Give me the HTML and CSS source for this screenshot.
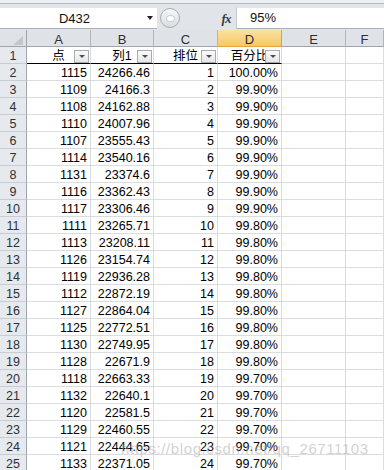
FILE: index.html
```html
<!DOCTYPE html>
<html lang="zh-CN">
<head>
    <meta charset="UTF-8">
    <title>Sheet</title>
    <link rel="stylesheet" href="styles.css">
</head>
<body>
    <div class="topstrip"></div>
    <div class="fbar">
        <div class="namebox"><span class="nb-text">D432</span><span class="nb-arrow"></span></div>
        <div class="splitter"><span class="shine"></span></div>
        <div class="fx">fx</div>
        <div class="formula">95%</div>
    </div>

    <div class="sheet">
        <div class="row colhead">
            <div class="corner"><svg width="10" height="9" viewBox="0 0 10 9"><polygon points="10,0 10,9 0,9" fill="#c3c8cf"/></svg></div>
            <div class="ch">A</div><div class="ch">B</div><div class="ch">C</div>
            <div class="ch sel">D</div><div class="ch">E</div><div class="ch">F</div>
        </div>
        <div class="row thead">
            <div class="rh">1</div>
            <div class="c hd">点<span class="dd"></span></div>
            <div class="c hd">列1<span class="dd"></span></div>
            <div class="c hd">排位<span class="dd"></span></div>
            <div class="c hd">百分比<span class="dd"></span></div>
            <div class="c"></div><div class="c"></div>
        </div>
        <div class="row"><div class="rh">2</div><div class="c">1115</div><div class="c">24266.46</div><div class="c">1</div><div class="c">100.00%</div><div class="c"></div><div class="c"></div></div>
        <div class="row"><div class="rh">3</div><div class="c">1109</div><div class="c">24166.3</div><div class="c">2</div><div class="c">99.90%</div><div class="c"></div><div class="c"></div></div>
        <div class="row"><div class="rh">4</div><div class="c">1108</div><div class="c">24162.88</div><div class="c">3</div><div class="c">99.90%</div><div class="c"></div><div class="c"></div></div>
        <div class="row"><div class="rh">5</div><div class="c">1110</div><div class="c">24007.96</div><div class="c">4</div><div class="c">99.90%</div><div class="c"></div><div class="c"></div></div>
        <div class="row"><div class="rh">6</div><div class="c">1107</div><div class="c">23555.43</div><div class="c">5</div><div class="c">99.90%</div><div class="c"></div><div class="c"></div></div>
        <div class="row"><div class="rh">7</div><div class="c">1114</div><div class="c">23540.16</div><div class="c">6</div><div class="c">99.90%</div><div class="c"></div><div class="c"></div></div>
        <div class="row"><div class="rh">8</div><div class="c">1131</div><div class="c">23374.6</div><div class="c">7</div><div class="c">99.90%</div><div class="c"></div><div class="c"></div></div>
        <div class="row"><div class="rh">9</div><div class="c">1116</div><div class="c">23362.43</div><div class="c">8</div><div class="c">99.90%</div><div class="c"></div><div class="c"></div></div>
        <div class="row"><div class="rh">10</div><div class="c">1117</div><div class="c">23306.46</div><div class="c">9</div><div class="c">99.90%</div><div class="c"></div><div class="c"></div></div>
        <div class="row"><div class="rh">11</div><div class="c">1111</div><div class="c">23265.71</div><div class="c">10</div><div class="c">99.80%</div><div class="c"></div><div class="c"></div></div>
        <div class="row"><div class="rh">12</div><div class="c">1113</div><div class="c">23208.11</div><div class="c">11</div><div class="c">99.80%</div><div class="c"></div><div class="c"></div></div>
        <div class="row"><div class="rh">13</div><div class="c">1126</div><div class="c">23154.74</div><div class="c">12</div><div class="c">99.80%</div><div class="c"></div><div class="c"></div></div>
        <div class="row"><div class="rh">14</div><div class="c">1119</div><div class="c">22936.28</div><div class="c">13</div><div class="c">99.80%</div><div class="c"></div><div class="c"></div></div>
        <div class="row"><div class="rh">15</div><div class="c">1112</div><div class="c">22872.19</div><div class="c">14</div><div class="c">99.80%</div><div class="c"></div><div class="c"></div></div>
        <div class="row"><div class="rh">16</div><div class="c">1127</div><div class="c">22864.04</div><div class="c">15</div><div class="c">99.80%</div><div class="c"></div><div class="c"></div></div>
        <div class="row"><div class="rh">17</div><div class="c">1125</div><div class="c">22772.51</div><div class="c">16</div><div class="c">99.80%</div><div class="c"></div><div class="c"></div></div>
        <div class="row"><div class="rh">18</div><div class="c">1130</div><div class="c">22749.95</div><div class="c">17</div><div class="c">99.80%</div><div class="c"></div><div class="c"></div></div>
        <div class="row"><div class="rh">19</div><div class="c">1128</div><div class="c">22671.9</div><div class="c">18</div><div class="c">99.80%</div><div class="c"></div><div class="c"></div></div>
        <div class="row"><div class="rh">20</div><div class="c">1118</div><div class="c">22663.33</div><div class="c">19</div><div class="c">99.70%</div><div class="c"></div><div class="c"></div></div>
        <div class="row"><div class="rh">21</div><div class="c">1132</div><div class="c">22640.1</div><div class="c">20</div><div class="c">99.70%</div><div class="c"></div><div class="c"></div></div>
        <div class="row"><div class="rh">22</div><div class="c">1120</div><div class="c">22581.5</div><div class="c">21</div><div class="c">99.70%</div><div class="c"></div><div class="c"></div></div>
        <div class="row"><div class="rh">23</div><div class="c">1129</div><div class="c">22460.55</div><div class="c">22</div><div class="c">99.70%</div><div class="c"></div><div class="c"></div></div>
        <div class="row"><div class="rh">24</div><div class="c">1121</div><div class="c">22444.65</div><div class="c">23</div><div class="c">99.70%</div><div class="c"></div><div class="c"></div></div>
        <div class="row"><div class="rh">25</div><div class="c">1133</div><div class="c">22371.05</div><div class="c">24</div><div class="c">99.70%</div><div class="c"></div><div class="c"></div></div>
    </div>

    <div class="watermark">https://blog.csdn.net/qq_26711103</div>
</body>
</html>
```

FILE: styles.css
```css
body {
    margin: 0;
    background: #fff;
    font-family: "Liberation Sans", Arial, "Noto Sans CJK SC", sans-serif;
    overflow: hidden;
    position: relative;
}

/* formula bar */
.topstrip {
    height: 3px;
    background: #eceff3;
    border-bottom: 1px solid #b4bac2;
}
.fbar {
    display: flex;
    align-items: flex-start;
    height: 26px;
    background: #e1e5ea;
}
.namebox {
    display: flex;
    align-items: center;
    width: 157px;
    height: 20px;
    margin-top: 3px;
    background: #fff;
    border-top: 1px solid #e3e6ea;
    border-bottom: 1px solid #a9afb6;
}
.nb-text {
    flex: 1;
    text-align: center;
    font-size: 13px;
    color: #111;
    padding-left: 2px;
}
.nb-arrow {
    width: 0;
    height: 0;
    margin-right: 4px;
    border-left: 3px solid transparent;
    border-right: 3px solid transparent;
    border-top: 4px solid #222;
}
.splitter {
    display: flex;
    align-items: center;
    justify-content: center;
    width: 18px;
    height: 18px;
    margin: 4px 0 0 3px;
    border: 1px solid #a6acb4;
    border-radius: 50%;
    background: linear-gradient(#f6f7f9, #d9dee4);
}
.shine {
    width: 7px;
    height: 5px;
    border-radius: 50%;
    background: #fff;
    border: 1px solid #c9ced5;
}
.fx {
    width: 20px;
    margin: 7px 0 0 36px;
    text-align: center;
    font-family: "Liberation Serif", serif;
    font-style: italic;
    font-weight: bold;
    font-size: 13px;
    color: #3a3a3a;
    letter-spacing: -1px;
}
.formula {
    flex: 1;
    height: 20px;
    margin-top: 3px;
    padding-left: 13px;
    line-height: 20px;
    font-size: 13px;
    color: #111;
    background: #fff;
    border-top: 1px solid #e3e6ea;
    border-left: 1px solid #c4c9cf;
    border-bottom: 1px solid #a9afb6;
}

/* grid */
.sheet {
    background: #fff;
}
.row {
    display: grid;
    grid-template-columns: 27px 64px 63px 64px 64px 64px 1fr;
    height: 17px;
}
.row > div {
    box-sizing: border-box;
    height: 17px;
    border-bottom: 1px solid #dadcdf;
    border-right: 1px solid #dadcdf;
}
.c {
    position: relative;
    text-align: right;
    padding: 2px 3px 0 0;
    line-height: 15px;
    font-size: 12.5px;
    color: #000;
    white-space: nowrap;
    overflow: hidden;
}
.row > .rh {
    text-align: center;
    padding-top: 2px;
    line-height: 15px;
    font-size: 12.5px;
    color: #2e3136;
    background: #e6e9ed;
    border-bottom-color: #c8cdd4;
    border-right-color: #9ea5ad;
}

.colhead {
    margin-top: 0;
}
.colhead > div {
    background: #dfe3e8;
}
.row > .corner {
    display: flex;
    align-items: flex-end;
    justify-content: flex-end;
    padding: 0 3px 1px 0;
    border-right-color: #9ea5ad;
    border-bottom-color: #9ea5ad;
}
.row > .ch {
    text-align: center;
    padding-top: 2px;
    line-height: 15px;
    font-size: 13px;
    color: #2d2f33;
    border-right-color: #b1b6bd;
    border-bottom-color: #9ea5ad;
}
.row > .ch.sel {
    background: linear-gradient(#fbe2a0, #f4c866);
    border-right-color: #c9a65c;
    border-bottom-color: #e2a43e;
}

/* table header row */
.row > .hd {
    text-align: center;
    padding-right: 0;
    border-bottom-color: #000;
}
.dd {
    position: absolute;
    right: 1px;
    top: 3px;
    width: 15px;
    height: 13px;
    box-sizing: border-box;
    border: 1px solid #a7abb0;
    background: linear-gradient(#fafafa, #e4e6e9);
}
.dd::after {
    content: "";
    position: absolute;
    left: 4px;
    top: 4px;
    border-left: 3px solid transparent;
    border-right: 3px solid transparent;
    border-top: 3px solid #4a4d52;
}

.watermark {
    position: absolute;
    left: 121px;
    top: 441px;
    font-size: 15px;
    letter-spacing: 0.6px;
    line-height: 15px;
    color: rgba(165, 165, 165, 0.5);
    white-space: nowrap;
}
```
